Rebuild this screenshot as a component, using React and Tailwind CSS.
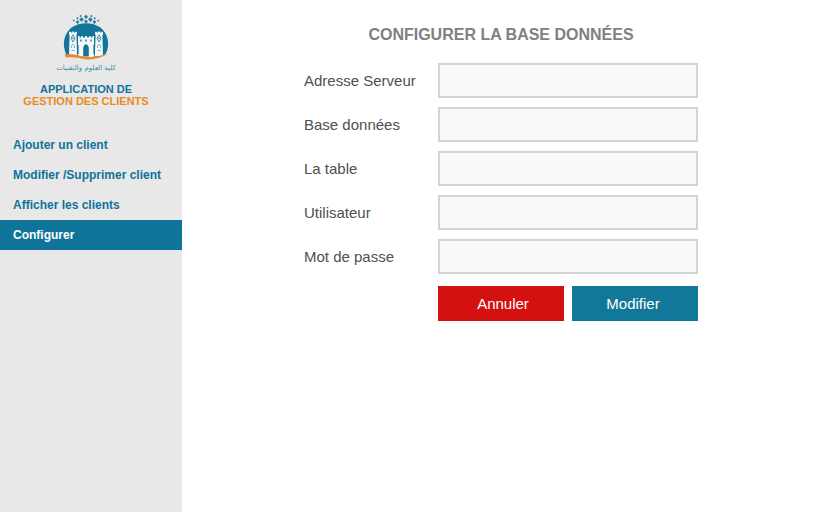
const navItems = [
  { label: "Ajouter un client", active: false },
  { label: "Modifier /Supprimer client", active: false },
  { label: "Afficher les clients", active: false },
  { label: "Configurer", active: true },
];

const fields = [
  { id: "server", label: "Adresse Serveur", type: "text" },
  { id: "database", label: "Base données", type: "text" },
  { id: "table", label: "La table", type: "text" },
  { id: "user", label: "Utilisateur", type: "text" },
  { id: "password", label: "Mot de passe", type: "password" },
];

// Small diamonds that rise from the top of the dome: [x, y, half-size]
const sparks = [
  [86, 16.8, 2.1], [81.6, 19.6, 2.3], [90.4, 19.6, 2.3], [86, 21.6, 2],
  [80.6, 16, 1.2], [91.4, 16, 1.2], [77.4, 18.2, 1.2], [94.6, 18.2, 1.2],
  [77.6, 22, 1.9], [94.4, 22, 1.9], [73.8, 20.6, 1.2], [98.2, 20.6, 1.2],
];

function Tower() {
  return (
    <g>
      <path
        d="M69 55.6 L69.6 35 L69 34.4 V31.8 H70.8 V32.6 H72.1 V31.4 H73.9 V32.6 H75.2 V31.8 H76.9 V34.4 L76.4 35 L77.2 56.6 Z"
        fill="#f4f8fa"
      />
      <path d="M73 34.8 L75 38.4 L73 42 L71 38.4 Z" fill="none" stroke="#2f84a4" strokeWidth="0.9" />
      <circle cx="73" cy="38.4" r="0.8" fill="#2f84a4" />
      <path d="M71.6 48 V45.4 Q73 42.8 74.4 45.4 V48 M71.4 50.4 H74.6" fill="none" stroke="#5b9db6" strokeWidth="0.8" />
    </g>
  );
}

function Logo() {
  return (
    <svg viewBox="50 8 74 66" className="h-[66px] w-[74px]" role="img" aria-label="كلية العلوم والتقنيات">
      {sparks.map(([x, y, r]) => (
        <path key={`${x}-${y}`} d={`M${x} ${y - r} l${r} ${r} l${-r} ${r} l${-r} ${-r} Z`} fill="#277e9f" />
      ))}
      <path
        d="M66.4 55 C61.6 45 63.8 34 71.6 27.6 Q78 23.2 86 23.2 Q94 23.2 100.4 27.6 C108.2 34 110.4 45 105.6 54 Q96 59 86 58.4 Q76 57 66.4 55 Z"
        fill="#127498"
      />
      <Tower />
      <g transform="translate(172 0) scale(-1 1)">
        <Tower />
      </g>
      <path
        d="M78 57 V36 H79.6 V37.4 H81.2 V36 H82.8 V37.4 H85 V36 H87 V37.4 H89.2 V36 H90.8 V37.4 H92.4 V36 H94 V57 Z"
        fill="#f4f8fa"
      />
      <path d="M78 45 V54 M94 45 V54" stroke="#127498" strokeWidth="1.2" />
      <path d="M83.2 56.5 V47.8 Q83.4 45 86 44 Q88.6 45 88.8 47.8 V56.5 Z" fill="#127498" />
      <path d="M80.2 41.4 V39.4 H81.6 V41.4 Z M85.3 41.4 V39.4 H86.7 V41.4 Z M90.4 41.4 V39.4 H91.8 V41.4 Z" fill="#127498" />
      <path
        d="M64.6 54.4 Q72 53.4 80 55.8 Q94 59.2 108.4 53.6 Q98 60.4 85 59.2 Q75 56.6 65.8 57.4 Z"
        fill="#e98b2b"
      />
      <text
        x="86"
        y="70"
        textAnchor="middle"
        direction="rtl"
        fill="#3d8aa6"
        fontSize="7"
        className="font-['DejaVu_Sans',sans-serif]"
      >
        كلية العلوم والتقنيات
      </text>
    </svg>
  );
}

export default function App() {
  return (
    <div className="flex min-h-screen bg-white font-['Liberation_Sans',Arial,sans-serif]">
      <aside className="w-[182px] shrink-0 bg-[#e8e8e8]">
        <header className="flex flex-col items-center pt-2 pr-[10px] text-center">
          <div className="pl-0.5">
            <Logo />
          </div>
          <h1 className="mt-[9px] text-[11px] leading-3 font-bold text-[#127498]">
            APPLICATION DE
            <span className="block text-[#e98b24]">GESTION DES CLIENTS</span>
          </h1>
        </header>
        <nav className="mt-[23px]">
          {navItems.map((item) => (
            <a
              key={item.label}
              href="#"
              aria-current={item.active ? "page" : undefined}
              className={
                item.active
                  ? "block bg-[#107399] px-[13px] text-xs leading-[30px] font-bold text-white"
                  : "block px-[13px] text-xs leading-[30px] font-bold text-[#107399]"
              }
            >
              {item.label}
            </a>
          ))}
        </nav>
      </aside>

      <main className="flex flex-1 flex-col items-center pt-[25px] pr-4 pl-[17px]">
        <h2 className="text-base leading-5 font-bold text-[#808080]">CONFIGURER LA BASE DONNÉES</h2>
        <form
          className="mt-[18px] w-full max-w-[394px] text-[15px] leading-6"
          onSubmit={(e) => e.preventDefault()}
        >
          <div className="flex flex-col gap-[9px]">
            {fields.map((field) => (
              <div key={field.id} className="flex items-center">
                <label htmlFor={field.id} className="w-[134px] shrink-0 pt-px text-[#505050]">
                  {field.label}
                </label>
                <input
                  id={field.id}
                  type={field.type}
                  className="h-[35px] min-w-0 flex-1 border-2 border-[#d3d3d3] bg-[#f8f9fb] px-2 outline-none"
                />
              </div>
            ))}
          </div>
          <div className="mt-3 ml-[134px] flex gap-2">
            <button type="button" className="h-[35px] flex-1 bg-[#d41111] pt-px pl-1 text-white">
              Annuler
            </button>
            <button type="submit" className="h-[35px] flex-1 bg-[#117899] pt-px pr-1 text-white">
              Modifier
            </button>
          </div>
        </form>
      </main>
    </div>
  );
}
